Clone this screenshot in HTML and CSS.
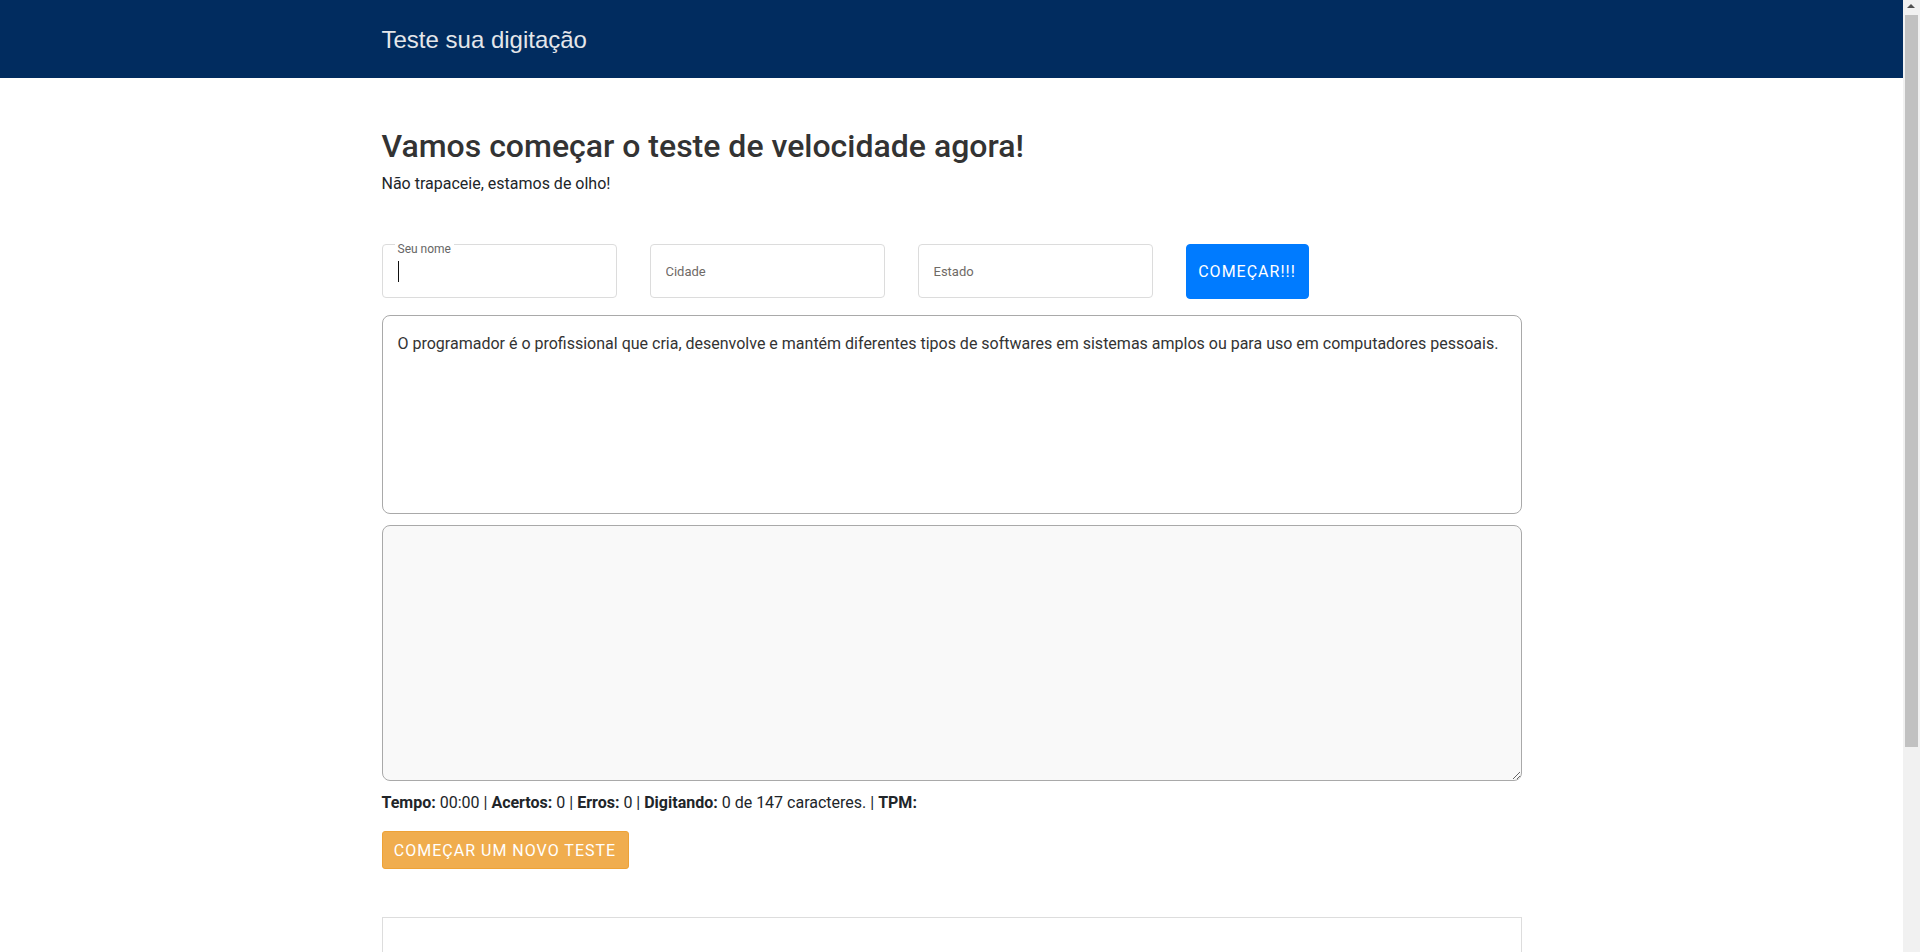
FILE: index.html
```html
<!DOCTYPE html>
<html lang="pt-BR">
<head>
<meta charset="utf-8">
<title>Teste sua digitação</title>
<link rel="stylesheet" href="styles.css">
</head>
<body>
<header class="topbar">
  <div class="container topbar-inner">
    <span class="brand">Teste sua digitação</span>
  </div>
</header>
<main class="container main">
  <h2 class="title">Vamos começar o teste de velocidade agora!</h2>
  <p class="subtitle">Não trapaceie, estamos de olho!</p>
  <form class="fields">
    <div class="field field-float">
      <label class="float-label">Seu nome</label>
      <input class="field-input" type="text">
      <span class="caret"></span>
    </div>
    <div class="field">
      <input class="field-input" type="text" placeholder="Cidade">
    </div>
    <div class="field">
      <input class="field-input" type="text" placeholder="Estado">
    </div>
    <button type="button" class="btn btn-start">Começar!!!</button>
  </form>
  <div class="sample">O programador é o profissional que cria, desenvolve e mantém diferentes tipos de softwares em sistemas amplos ou para uso em computadores pessoais.</div>
  <textarea class="typing"></textarea>
  <p class="stats"><b>Tempo:</b> 00:00 | <b>Acertos:</b> 0 | <b>Erros:</b> 0 | <b>Digitando:</b> 0 de 147 caracteres. | <b>TPM:</b></p>
  <button type="button" class="btn btn-reset">Começar um novo teste</button>
  <section class="results"></section>
</main>
<div class="scrollbar" aria-hidden="true">
  <span class="scroll-arrow"></span>
  <span class="scroll-thumb"></span>
</div>
</body>
</html>
```
FILE: styles.css
```css
html, body {
  margin: 0;
  padding: 0;
}
body {
  font-family: Roboto, "Liberation Sans", Arial, sans-serif;
  font-size: 16px;
  line-height: 1.5;
  color: #212529;
  background: #fff;
  padding-right: 17px;
}
.container {
  width: 1140px;
  margin: 0 auto;
}
.topbar {
  background: #012c5f;
  height: 78px;
}
.topbar-inner {
  height: 78px;
  display: flex;
  align-items: center;
}
.brand {
  font-family: "Liberation Sans", Arial, sans-serif;
  font-size: 24px;
  color: #e4e6ea;
  line-height: 1;
  padding-top: 2px;
}
.main {
  padding-top: 49px;
  padding-bottom: 20px;
}
.title {
  margin: 0 0 7px;
  font-size: 32px;
  font-weight: 500;
  line-height: 1.2;
  color: #333;
}
.subtitle {
  margin: 0;
  font-size: 16px;
  color: #212529;
}
.fields {
  margin-top: 48px;
  display: flex;
  gap: 33px;
  align-items: stretch;
  height: 54px;
}
.field {
  position: relative;
  width: 235px;
}
.field-input {
  box-sizing: border-box;
  width: 100%;
  height: 54px;
  border: 1px solid #dcdcdc;
  border-radius: 4px;
  padding: 0 15px;
  font-family: Roboto, "Liberation Sans", Arial, sans-serif;
  font-size: 13px;
  color: #333;
  background: #fff;
  outline: none;
}
.field-input::placeholder {
  color: #6f6a66;
}
.float-label {
  position: absolute;
  left: 13px;
  top: -2px;
  padding: 0 3px;
  background: #fff;
  font-size: 12px;
  line-height: 14px;
  color: #666;
}
.caret {
  position: absolute;
  left: 16px;
  top: 17px;
  width: 1px;
  height: 21px;
  background: #111;
}
.btn {
  font-family: Roboto, "Liberation Sans", Arial, sans-serif;
  font-size: 16px;
  text-transform: uppercase;
  letter-spacing: 1px;
  color: #fff;
  border-radius: 3px;
  cursor: pointer;
}
.btn-start {
  width: 123px;
  height: 55px;
  padding: 0;
  background: #007bff;
  border: 1px solid #007bff;
  border-radius: 4px;
}
.sample {
  box-sizing: border-box;
  margin-top: 17px;
  height: 199px;
  border: 1px solid #a9a9a9;
  border-radius: 8px;
  padding: 16px 15px;
  font-size: 16px;
  line-height: 24px;
  color: #333;
}
.typing {
  display: block;
  box-sizing: border-box;
  width: 100%;
  height: 256px;
  margin: 11px 0 0;
  border: 1px solid #a9a9a9;
  border-radius: 8px;
  background: #f9f9f9;
  padding: 16px 15px;
  font-family: Roboto, "Liberation Sans", Arial, sans-serif;
  font-size: 16px;
  outline: none;
}
.stats {
  margin: 10px 0 0;
  line-height: 24px;
  color: #212529;
}
.stats b {
  font-weight: 700;
}
.btn-reset {
  display: block;
  margin-top: 16px;
  height: 38px;
  width: 247px;
  padding: 0;
  background: #f0ad4e;
  border: 1px solid #eea236;
}
.results {
  margin-top: 48px;
  height: 257px;
  border: 1px solid #dddddd;
  border-bottom: 0;
}
.scrollbar {
  position: fixed;
  top: 0;
  right: 0;
  width: 17px;
  height: 100vh;
  background: #f1f1f1;
}
.scroll-arrow {
  position: absolute;
  top: 4px;
  left: 4px;
  width: 0;
  height: 0;
  border-left: 4px solid transparent;
  border-right: 4px solid transparent;
  border-bottom: 4px solid #505050;
}
.scroll-thumb {
  position: absolute;
  top: 15px;
  left: 2px;
  width: 13px;
  height: 732px;
  background: #c1c1c1;
}
```
